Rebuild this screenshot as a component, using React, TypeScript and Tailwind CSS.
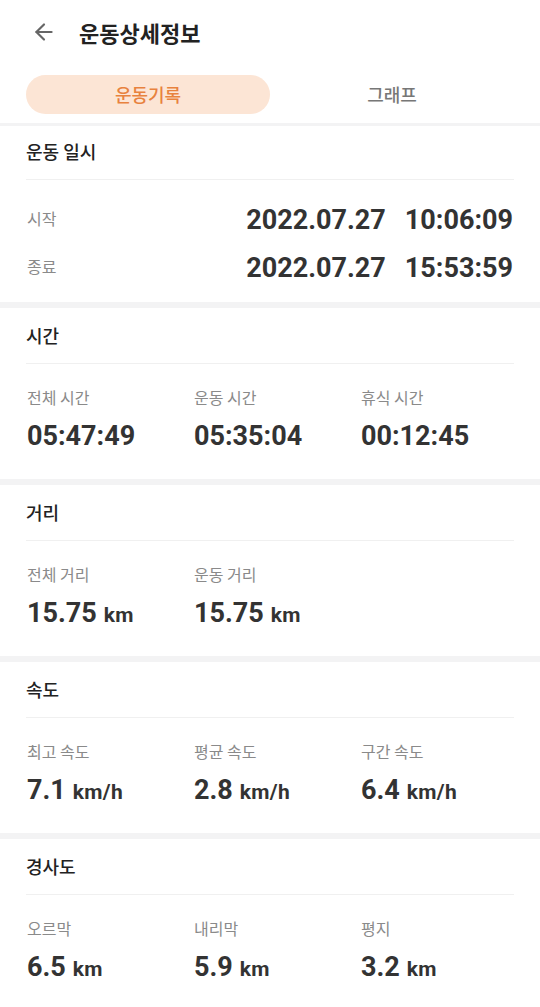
import { ArrowLeft } from "lucide-react";

const kr = "font-['Noto_Sans_CJK_KR','Noto_Sans',sans-serif]";
const num = "font-['Roboto','Noto_Sans_CJK_KR',sans-serif]";

interface Stat {
    label: string;
    value: string;
    unit?: string;
}

function SectionTitle({ title, first }: { title: string; first?: boolean }) {
    return (
        <div className={`mx-[26px] flex items-center border-b border-[#f0f0f0] ${first ? "h-[54px]" : "h-[56px]"}`}>
            <span className={`text-[18px] font-medium text-[#222] leading-none ${first ? "-mt-[3px]" : "-mt-[1px]"}`}>{title}</span>
        </div>
    );
}

function StatSection({ title, stats }: { title: string; stats: Stat[] }) {
    return (
        <section className="bg-white">
            <SectionTitle title={title} />
            <div className="mx-[26px] grid grid-cols-[167px_167px_1fr] pt-[22px] pb-[27px]">
                {stats.map((s) => (
                    <div key={s.label} className="pl-[1px]">
                        <div className={`${kr} text-[16px] text-[#8a8a8a] leading-[22px]`}>{s.label}</div>
                        <div className={`${num} mt-[12px] h-[32px] flex items-center text-[27px] font-bold text-[#333] leading-none`}>
                            {s.value}
                            {s.unit && <span className="ml-[7px] text-[21px] mt-[4px] tracking-[0.3px]">{s.unit}</span>}
                        </div>
                    </div>
                ))}
            </div>
        </section>
    );
}

function Gap() {
    return <div className="h-[6px] bg-[#f3f3f4]" />;
}

export default function App() {
    return (
        <div className={`${kr} w-[540px] min-h-[1007px] bg-white`}>
            <header className="h-[64px] flex items-center pl-[31px]">
                <ArrowLeft size={26} strokeWidth={2} className="text-[#666]" />
                <h1 className="ml-[22px] text-[22px] font-semibold text-[#222] leading-none">운동상세정보</h1>
            </header>
            <div className="mt-[11px] px-[26px] pb-[9px] grid grid-cols-2">
                <button className="h-[39px] rounded-full bg-[#fce5d5] text-[18px] font-medium text-[#e8823e]">운동기록</button>
                <button className="h-[39px] rounded-full text-[18px] font-medium text-[#777]">그래프</button>
            </div>
            <div className="h-[3px] bg-[#f3f3f4]" />

            <section className="bg-white">
                <SectionTitle title="운동 일시" first />
                <div className="mx-[26px] pt-[16px] pb-[10px]">
                    {[
                        { label: "시작", date: "2022.07.27", time: "10:06:09" },
                        { label: "종료", date: "2022.07.27", time: "15:53:59" },
                    ].map((r) => (
                        <div key={r.label} className="h-[48px] flex items-center justify-between">
                            <span className="text-[16px] text-[#8a8a8a] -mt-[4px] pl-[1px]">{r.label}</span>
                            <span className={`${num} text-[27px] font-bold text-[#333] leading-none pr-[1px]`}>
                                {r.date}
                                <span className="ml-[19px]">{r.time}</span>
                            </span>
                        </div>
                    ))}
                </div>
            </section>
            <Gap />

            <StatSection
                title="시간"
                stats={[
                    { label: "전체 시간", value: "05:47:49" },
                    { label: "운동 시간", value: "05:35:04" },
                    { label: "휴식 시간", value: "00:12:45" },
                ]}
            />
            <Gap />
            <StatSection
                title="거리"
                stats={[
                    { label: "전체 거리", value: "15.75", unit: "km" },
                    { label: "운동 거리", value: "15.75", unit: "km" },
                ]}
            />
            <Gap />
            <StatSection
                title="속도"
                stats={[
                    { label: "최고 속도", value: "7.1", unit: "km/h" },
                    { label: "평균 속도", value: "2.8", unit: "km/h" },
                    { label: "구간 속도", value: "6.4", unit: "km/h" },
                ]}
            />
            <Gap />
            <StatSection
                title="경사도"
                stats={[
                    { label: "오르막", value: "6.5", unit: "km" },
                    { label: "내리막", value: "5.9", unit: "km" },
                    { label: "평지", value: "3.2", unit: "km" },
                ]}
            />
        </div>
    );
}
